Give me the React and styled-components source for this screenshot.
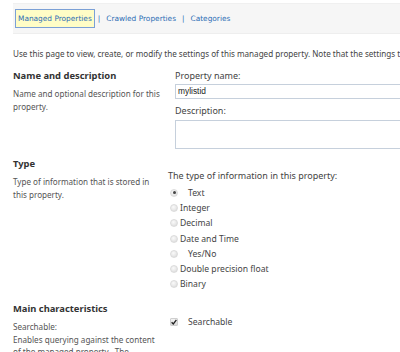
import React from "react";
import styled, { createGlobalStyle } from "styled-components";

const GlobalStyle = createGlobalStyle`
  html, body {
    margin: 0;
    padding: 0;
    background: #ffffff;
    overflow: hidden;
  }
  body {
    font-family: "Noto Sans", "Open Sans", sans-serif;
    color: #444;
  }
`;

const Page = styled.div`
  width: 400px;
  height: 352px;
  overflow: hidden;
  padding: 3px 0 0 13px;
  box-sizing: border-box;
`;

const Toolbar = styled.div`
  display: flex;
  align-items: center;
  height: 29px;
  padding-left: 2px;
  background: #f6f6f6;
  border-top: 1px solid #f0f0f0;
  border-bottom: 1px solid #eeeeee;
  font-family: "DejaVu Sans", Verdana, sans-serif;
  font-size: 7.4px;
  white-space: nowrap;
`;

const TabLink = styled.a`
  color: #2d6db5;
  text-decoration: none;
  padding: 4px 2px;
  border: 1px solid ${(p) => (p.$active ? "#7ba0d6" : "transparent")};
  background: ${(p) => (p.$active ? "#fffdc6" : "transparent")};
`;

const Sep = styled.span`
  color: #2d6db5;
  margin: 0 3px;
`;

const Intro = styled.p`
  margin: 14px 0 0;
  font-size: 8.1px;
  color: #444;
  white-space: nowrap;
  overflow: hidden;
`;

const Section = styled.div`
  display: grid;
  grid-template-columns: ${(p) => p.$left || "162px"} 1fr;
  margin-top: ${(p) => p.$top || "0px"};
`;

const Info = styled.div`
  display: flex;
  flex-direction: column;
`;

const Heading = styled.h3`
  margin: 0 0 6px;
  font-size: 9.4px;
  font-weight: 700;
  color: #333;
  line-height: 13px;
`;

const Desc = styled.p`
  margin: 0;
  font-size: 8.1px;
  line-height: 12.5px;
  color: #555;
  width: ${(p) => p.$w || "150px"};
`;

const Field = styled.div`
  display: flex;
  flex-direction: column;
  padding-top: ${(p) => p.$padTop || "0px"};
`;

const Label = styled.div`
  font-size: 9px;
  color: #444;
  line-height: 13px;
  white-space: nowrap;
`;

const TextBox = styled.div`
  height: 13px;
  margin: 2px 0 5px;
  border: 1px solid #c6d0dc;
  padding: 0 2px;
  font-family: "Liberation Sans", Arial, sans-serif;
  font-size: 8.4px;
  line-height: 13px;
  color: #222;
  width: 260px;
`;

const TextArea = styled.div`
  height: 27px;
  margin-top: 3px;
  border: 1px solid #c6d0dc;
  width: 260px;
`;

const OptionList = styled.div`
  display: flex;
  flex-direction: column;
  margin-top: 3px;
`;

const Option = styled.div`
  display: flex;
  align-items: center;
  height: 15.3px;
  font-size: 8.6px;
  color: #444;
  white-space: nowrap;
`;

const Radio = styled.span`
  width: 8px;
  height: 8px;
  border-radius: 50%;
  margin: 0 ${(p) => (p.$wide ? "10px" : "2px")} 0 2px;
  flex-shrink: 0;
  box-sizing: border-box;
  border: 1px solid #dcdcdc;
  background: radial-gradient(circle at 40% 35%, #fafafa 0%, #e6e6e6 60%, #d2d2d2 100%);
  position: relative;

  &::after {
    content: "";
    display: ${(p) => (p.$checked ? "block" : "none")};
    position: absolute;
    left: 1.5px;
    top: 1.5px;
    width: 3px;
    height: 3px;
    border-radius: 50%;
    background: #444;
  }
`;

const Check = styled.span`
  width: 8px;
  height: 8px;
  margin: 0 10px 0 2px;
  border: 1px solid #cfcfcf;
  border-radius: 1px;
  background: linear-gradient(#f4f4f4, #d9d9d9);
  display: flex;
  align-items: center;
  justify-content: center;
  flex-shrink: 0;
  box-sizing: border-box;
`;

const types = [
  { label: "Text", checked: true, wide: true },
  { label: "Integer" },
  { label: "Decimal" },
  { label: "Date and Time" },
  { label: "Yes/No", wide: true },
  { label: "Double precision float" },
  { label: "Binary" },
];

export default function App() {
  return (
    <>
      <GlobalStyle />
      <Page>
        <Toolbar>
          <TabLink $active>Managed Properties</TabLink>
          <Sep>|</Sep>
          <TabLink>Crawled Properties</TabLink>
          <Sep>|</Sep>
          <TabLink>Categories</TabLink>
        </Toolbar>

        <Intro>
          Use this page to view, create, or modify the settings of this managed
          property. Note that the settings take effect after the next crawl.
        </Intro>

        <Section $top="10px">
          <Info>
            <Heading>Name and description</Heading>
            <Desc $w="156px">Name and optional description for this property.</Desc>
          </Info>
          <Field>
            <Label>Property name:</Label>
            <TextBox>mylistid</TextBox>
            <Label>Description:</Label>
            <TextArea />
          </Field>
        </Section>

        <Section $top="8px" $left="155px">
          <Info>
            <Heading>Type</Heading>
            <Desc>Type of information that is stored in this property.</Desc>
          </Info>
          <Field $padTop="12px">
            <Label>The type of information in this property:</Label>
            <OptionList>
              {types.map((t) => (
                <Option key={t.label}>
                  <Radio $checked={t.checked} $wide={t.wide} />
                  {t.label}
                </Option>
              ))}
            </OptionList>
          </Field>
        </Section>

        <Section $top="10px" $left="155px">
          <Info>
            <Heading>Main characteristics</Heading>
            <Desc $w="146px">
              Searchable:
              <br />
              Enables querying against the content of the managed property.&nbsp; The
              content of this managed property is included in the full-text index.
            </Desc>
          </Info>
          <Field $padTop="12px">
            <Option>
              <Check>
                <svg width="6" height="6" viewBox="0 0 6 6">
                  <path d="M0.6 3.2 L2.3 4.9 L5.4 0.9" fill="none" stroke="#222" strokeWidth="1.3" />
                </svg>
              </Check>
              Searchable
            </Option>
          </Field>
        </Section>
      </Page>
    </>
  );
}
